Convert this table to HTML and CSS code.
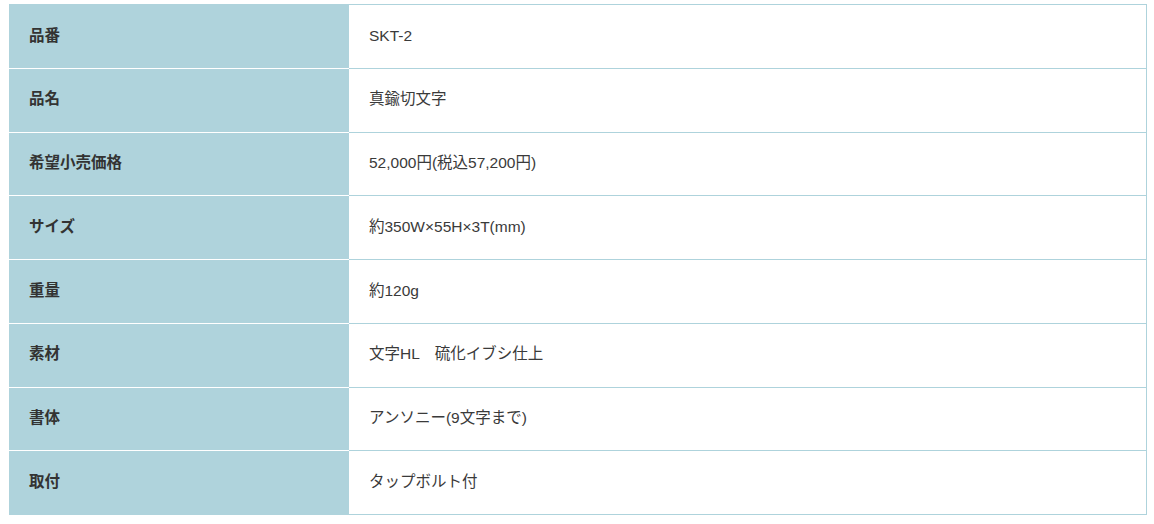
FILE: index.html
```html
<!DOCTYPE html>
<html lang="ja">
<head>
<meta charset="utf-8">
<link rel="stylesheet" href="styles.css">
</head>
<body>
<table class="spec">
  <tr><th>品番</th><td>SKT-2</td></tr>
  <tr><th>品名</th><td>真鍮切文字</td></tr>
  <tr><th>希望小売価格</th><td>52,000円(税込57,200円)</td></tr>
  <tr><th>サイズ</th><td>約350W×55H×3T(mm)</td></tr>
  <tr><th>重量</th><td>約120g</td></tr>
  <tr><th>素材</th><td>文字HL　硫化イブシ仕上</td></tr>
  <tr><th>書体</th><td>アンソニー(9文字まで)</td></tr>
  <tr><th>取付</th><td>タップボルト付</td></tr>
</table>
</body>
</html>
```
FILE: styles.css
```css
html, body {
  margin: 0;
  background: #ffffff;
}
body {
  padding: 4px 7px 0 9px;
  font-family: "Liberation Sans", "Noto Sans CJK JP", sans-serif;
  font-size: 15.5px;
  color: #3a3a3a;
}
.spec {
  width: 1138px;
  border-collapse: collapse;
  table-layout: fixed;
}
.spec th,
.spec td {
  height: 63.75px;
  padding: 0 20px 2px;
  text-align: left;
  vertical-align: middle;
  box-sizing: border-box;
  line-height: 1.4;
}
.spec th {
  width: 340px;
  background: #afd3dc;
  font-weight: bold;
  color: #333333;
  border-bottom: 1px solid #ffffff;
  border-top: 1px solid #ffffff;
}
.spec tr:first-child th {
  border-top: 1px solid #afd3dc;
}
.spec tr:last-child th {
  border-bottom: 1px solid #afd3dc;
}
.spec td {
  background: #ffffff;
  border: 1px solid #aed3dc;
  border-left: none;
}
```
